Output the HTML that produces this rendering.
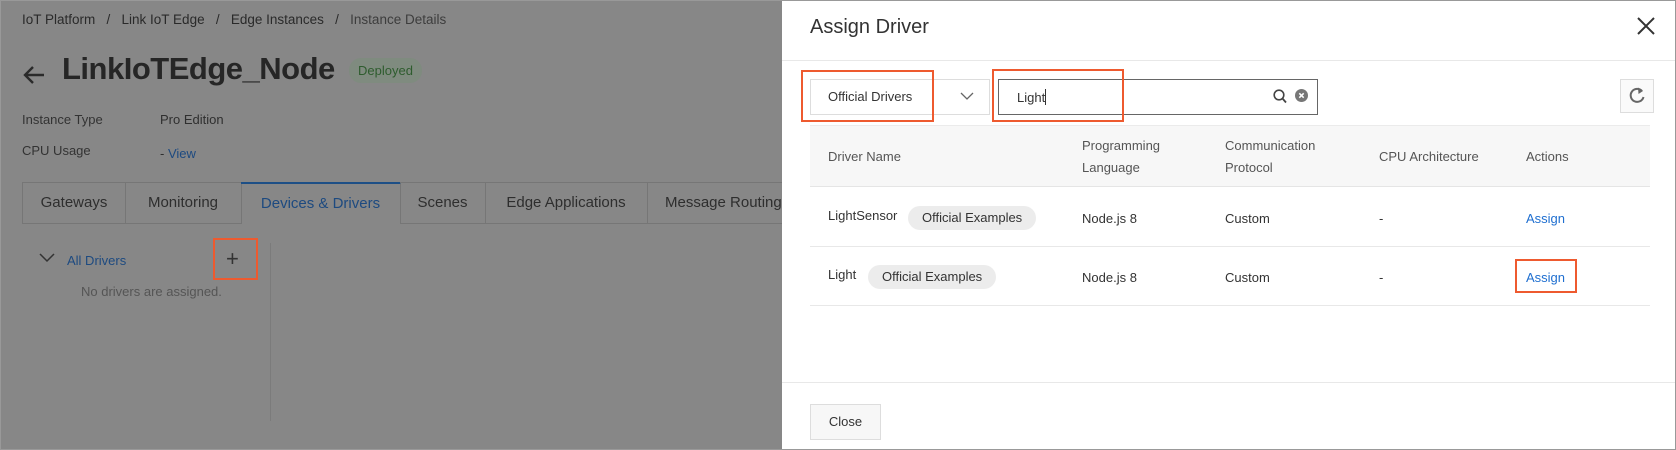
<!DOCTYPE html>
<html><head><meta charset="utf-8"><style>
*{margin:0;padding:0;box-sizing:border-box}
body{width:1676px;height:450px;position:relative;overflow:hidden;font-family:"Liberation Sans",sans-serif;font-size:13px;background:#fff}
.a{position:absolute;white-space:nowrap}
#left{position:absolute;left:0;top:0;width:782px;height:450px;background:#878787;color:#2b2b2b}
.red{position:absolute;border:2px solid #ee5a2f}
.tab{position:absolute;top:182px;height:42px;border:1px solid #767676;border-left:none;line-height:40px;text-align:center;font-size:15px;color:#2e2e2e}
#right{position:absolute;left:782px;top:0;width:894px;height:450px;background:#fff;color:#333}
.th{color:#555;font-size:13px;line-height:22px}
.tag{position:absolute;background:#ececec;border-radius:12px;height:24px;line-height:24px;padding:0 14px;font-size:13px;color:#333}
.link{color:#1f6fd0}
</style></head><body>
<div id="left">
 <div class="a" style="left:22px;top:12px;font-size:13.5px;color:#2a2a2a">IoT Platform &nbsp;&nbsp;/&nbsp;&nbsp; Link IoT Edge &nbsp;&nbsp;/&nbsp;&nbsp; Edge Instances &nbsp;&nbsp;/&nbsp;&nbsp; <span style="color:#3d3d3d">Instance Details</span></div>
 <svg class="a" style="left:22px;top:64px" width="24" height="22" viewBox="0 0 24 22"><path d="M22 11H3M11 3L3 11l8 8" stroke="#2a2a2a" stroke-width="2.4" fill="none"/></svg>
 <div class="a" style="left:62px;top:51px;font-size:31px;font-weight:bold;color:#262626;letter-spacing:-0.5px">LinkIoTEdge_Node</div>
 <div class="a" style="left:349px;top:58px;width:73px;height:25px;border-radius:12px;background:#7f8b7f;color:#2e5c2e;font-size:13px;line-height:25px;text-align:center">Deployed</div>
 <div class="a" style="left:22px;top:112px;color:#333">Instance Type</div>
 <div class="a" style="left:160px;top:112px;color:#2f2f2f">Pro Edition</div>
 <div class="a" style="left:22px;top:143px;color:#333">CPU Usage</div>
 <div class="a" style="left:160px;top:146px;color:#2f2f2f">- <span style="color:#1d4a80">View</span></div>
 <div class="tab" style="left:22px;width:104px;border-left:1px solid #767676">Gateways</div>
 <div class="tab" style="left:125px;width:117px">Monitoring</div>
 <div class="tab" style="left:241px;width:160px;border-top:2px solid #1d4f86;border-bottom:none;color:#1d4a80">Devices &amp; Drivers</div>
 <div class="tab" style="left:400px;width:86px">Scenes</div>
 <div class="tab" style="left:485px;width:163px">Edge Applications</div>
 <div class="tab" style="left:647px;width:140px;border-right:none;text-align:left;padding-left:18px">Message Routing</div>
 <svg class="a" style="left:39px;top:253px" width="16" height="10"><path d="M1 1l7 7 7-7" stroke="#333" stroke-width="1.5" fill="none"/></svg>
 <div class="a" style="left:67px;top:253px;color:#1d4a80">All Drivers</div>
 <div class="red" style="left:213px;top:238px;width:45px;height:42px"></div>
 <div class="a" style="left:226px;top:246px;font-size:22px;color:#333;line-height:26px">+</div>
 <div class="a" style="left:81px;top:284px;color:#555">No drivers are assigned.</div>
 <div class="a" style="left:270px;top:243px;width:1px;height:178px;background:#7b7b7b"></div>
</div>
<div id="right">
 <div class="a" style="left:28px;top:16px;font-size:20px;color:#333">Assign Driver</div>
 <svg class="a" style="left:855px;top:17px" width="18" height="18"><path d="M1 1l16 16M17 1L1 17" stroke="#333" stroke-width="2"/></svg>
 <div class="a" style="left:0;top:60px;width:894px;height:1px;background:#e8e8e8"></div>
 <div class="a" style="left:28px;top:79px;width:180px;height:36px;border:1px solid #ddd"></div>
 <div class="a" style="left:46px;top:89px;color:#333">Official Drivers</div>
 <svg class="a" style="left:178px;top:92px" width="14" height="9"><path d="M1 1l6 6 6-6" stroke="#666" stroke-width="1.3" fill="none"/></svg>
 <div class="red" style="left:19px;top:70px;width:133px;height:52px"></div>
 <div class="a" style="left:216px;top:79px;width:320px;height:36px;border:1px solid #666"></div>
 <div class="a" style="left:235px;top:89px;color:#333">Light<span style="display:inline-block;width:1px;height:16px;background:#333;vertical-align:-3px"></span></div>
 <svg class="a" style="left:491px;top:89px" width="14" height="15"><circle cx="6" cy="6" r="4.8" stroke="#444" stroke-width="1.6" fill="none"/><path d="M9.5 9.5l3.5 4" stroke="#444" stroke-width="1.8"/></svg>
 <svg class="a" style="left:513px;top:89px" width="13" height="13"><circle cx="6.5" cy="6.5" r="6.5" fill="#777"/><path d="M4.3 4.3l4.4 4.4M8.7 4.3L4.3 8.7" stroke="#fff" stroke-width="1.5"/></svg>
 <div class="red" style="left:210px;top:69px;width:132px;height:53px"></div>
 <div class="a" style="left:838px;top:79px;width:34px;height:34px;border:1px solid #ddd;background:#fafafa"></div>
 <svg class="a" style="left:846px;top:86px" width="18" height="20"><path d="M14 5A6.5 6.5 0 1 0 15.5 11" stroke="#666" stroke-width="2" fill="none"/><path d="M10 1.5l5 3.5-4.5 3z" fill="#666"/></svg>
 <div class="a" style="left:28px;top:125px;width:840px;height:62px;background:#f7f7f7;border-top:1px solid #ebebeb;border-bottom:1px solid #e5e5e5"></div>
 <div class="a th" style="left:46px;top:146px">Driver Name</div>
 <div class="a th" style="left:300px;top:135px">Programming<br>Language</div>
 <div class="a th" style="left:443px;top:135px">Communication<br>Protocol</div>
 <div class="a th" style="left:597px;top:146px">CPU Architecture</div>
 <div class="a th" style="left:744px;top:146px">Actions</div>
 <div class="a" style="left:46px;top:208px">LightSensor</div>
 <div class="tag" style="left:126px;top:206px">Official Examples</div>
 <div class="a" style="left:300px;top:211px">Node.js 8</div>
 <div class="a" style="left:443px;top:211px">Custom</div>
 <div class="a" style="left:597px;top:211px">-</div>
 <div class="a link" style="left:744px;top:211px">Assign</div>
 <div class="a" style="left:28px;top:246px;width:840px;height:1px;background:#e8e8e8"></div>
 <div class="a" style="left:46px;top:267px">Light</div>
 <div class="tag" style="left:86px;top:265px">Official Examples</div>
 <div class="a" style="left:300px;top:270px">Node.js 8</div>
 <div class="a" style="left:443px;top:270px">Custom</div>
 <div class="a" style="left:597px;top:270px">-</div>
 <div class="a link" style="left:744px;top:270px">Assign</div>
 <div class="red" style="left:733px;top:259px;width:62px;height:34px"></div>
 <div class="a" style="left:28px;top:305px;width:840px;height:1px;background:#e8e8e8"></div>
 <div class="a" style="left:0;top:382px;width:894px;height:1px;background:#e8e8e8"></div>
 <div class="a" style="left:28px;top:404px;width:71px;height:36px;border:1px solid #ddd;background:#f7f7f7;text-align:center;line-height:34px;color:#333">Close</div>
</div>
<div class="a" style="left:0;top:0;width:1676px;height:450px;border:1px solid #999"></div>
</body></html>
